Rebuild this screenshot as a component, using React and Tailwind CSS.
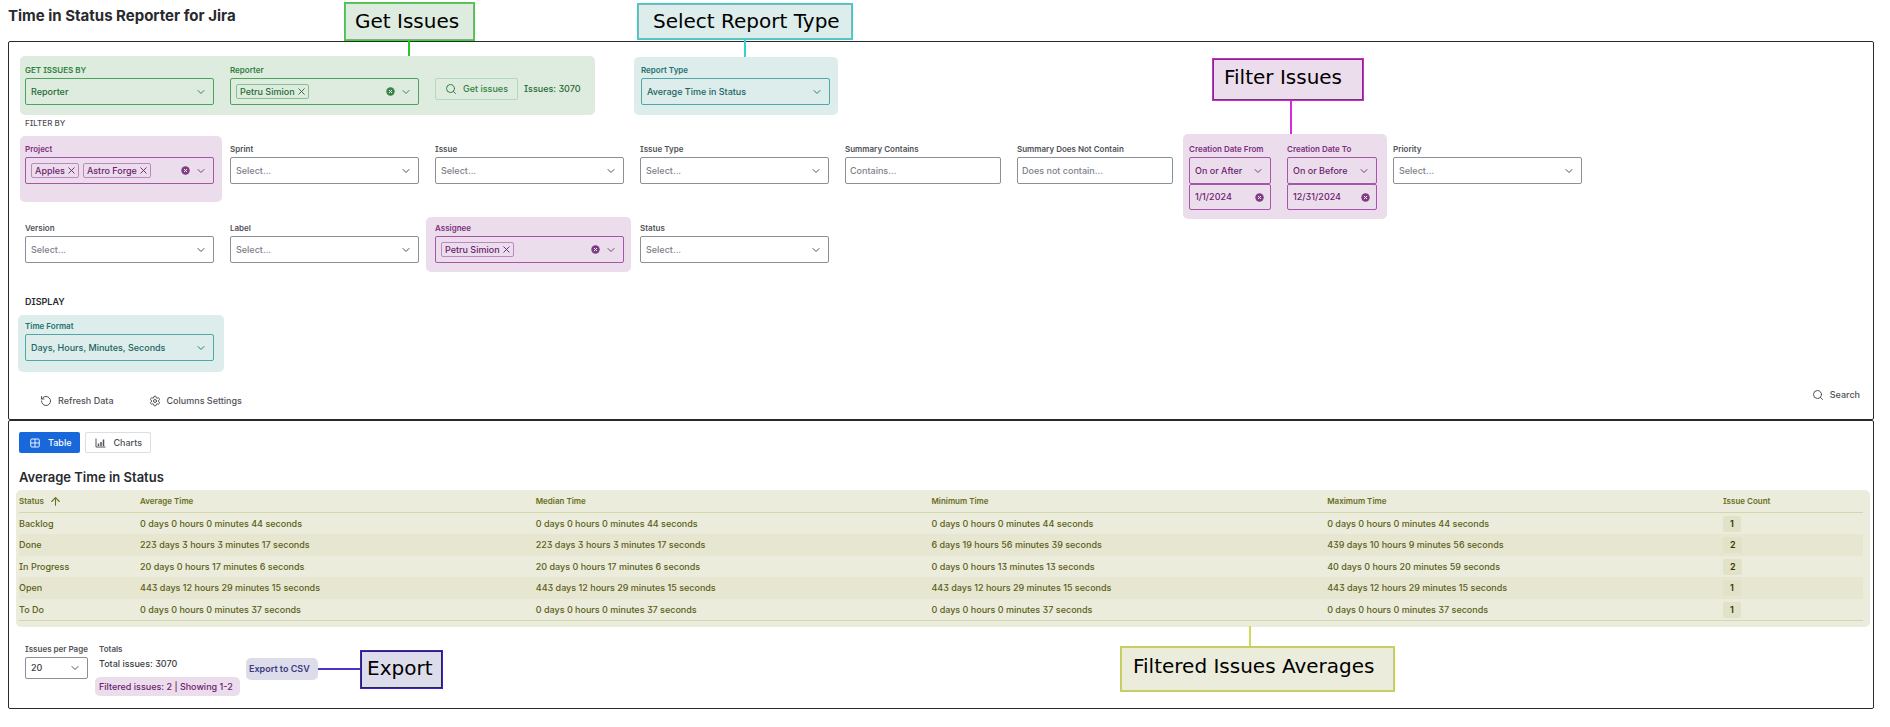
import React from "react";
import { ArrowUp, ChevronDown, RotateCcw, Search, Settings, X } from "lucide-react";

const tones = {
  plain: {
    label: "text-[#505258]",
    box: "border-[#8c8f97] bg-white",
    text: "text-[#7d818a]",
    icon: "text-[#505258]",
    tag: "",
  },
  green: {
    label: "text-[#2f8140]",
    box: "border-[#4ea35c]",
    text: "text-[#256b35]",
    icon: "text-[#3a8449]",
    tag: "border-[#86c190] text-[#256b35]",
  },
  teal: {
    label: "text-[#26716f]",
    box: "border-[#4fa8a5]",
    text: "text-[#1d6462]",
    icon: "text-[#2b7b79]",
    tag: "",
  },
  purple: {
    label: "text-[#7c2f80]",
    box: "border-[#a655a8]",
    text: "text-[#6b2270]",
    icon: "text-[#7f3b84]",
    tag: "border-[#bf87c2] text-[#6b2270]",
  },
};

const labelClass = "block h-[10px] whitespace-nowrap text-[8px] leading-[10px] font-semibold";

function ClearIcon() {
  return (
    <svg viewBox="0 0 16 16" className="size-[9px]" aria-hidden="true">
      <circle cx="8" cy="8" r="7.5" fill="currentColor" />
      <path d="M5.3 5.3l5.4 5.4M10.7 5.3l-5.4 5.4" stroke="white" strokeWidth="1.7" />
    </svg>
  );
}

function ChartIcon() {
  return (
    <svg viewBox="0 0 22 20" className="h-[10px] w-[11px]" fill="none" stroke="currentColor" strokeWidth="2" aria-hidden="true">
      <path d="M2 1v17h19" />
      <path d="M7 11v5M12 8v8M17 3v13" strokeWidth="3" />
    </svg>
  );
}

function TableIcon() {
  return (
    <svg viewBox="0 0 20 20" className="size-[10px]" fill="none" stroke="currentColor" strokeWidth="1.8" aria-hidden="true">
      <rect x="1.5" y="2" width="17" height="16" rx="2" />
      <path d="M10 2v16M1.5 10h17" />
    </svg>
  );
}

function SelectBox({ id, value, tone = "plain", dark = false, height = "h-[27px]" }) {
  const t = tones[tone];
  return (
    <div className={`relative ${height}`}>
      <select
        id={id}
        defaultValue={value}
        className={`block size-full appearance-none rounded-[2px] border pr-5 pl-[5px] text-[9px] font-medium outline-none ${t.box} ${dark ? "text-[#3b3d42]" : t.text}`}
      >
        <option>{value}</option>
      </select>
      <ChevronDown className={`pointer-events-none absolute inset-y-0 right-[7px] my-auto size-3 ${t.icon}`} />
    </div>
  );
}

function SelectField({ id, label, value = "Select...", tone = "plain", width = "w-[189px]" }) {
  return (
    <div className={`shrink-0 ${width}`}>
      <label htmlFor={id} className={`mb-[3px] ${labelClass} ${tones[tone].label}`}>{label}</label>
      <SelectBox id={id} value={value} tone={tone} />
    </div>
  );
}

function MultiField({ id, label, values, tone }) {
  const t = tones[tone];
  return (
    <div className="w-[189px] shrink-0">
      <label htmlFor={id} className={`mb-[3px] ${labelClass} ${t.label}`}>{label}</label>
      <div className={`flex h-[27px] items-center gap-1 rounded-[2px] border pr-[6px] pl-[5px] ${t.box}`}>
        {values.map((v) => (
          <span key={v} className={`flex h-[15px] shrink-0 items-center gap-px rounded-[2px] border pr-px pl-[3px] text-[9px] font-medium whitespace-nowrap ${t.tag}`}>
            {v}
            <button type="button" aria-label={`Remove ${v}`}><X className="size-[11px]" /></button>
          </span>
        ))}
        <input id={id} className="w-0 min-w-0 flex-1 bg-transparent text-[9px] outline-none" />
        <button type="button" aria-label={`Clear ${label}`} className={`mr-px ${t.icon}`}><ClearIcon /></button>
        <button type="button" aria-label={`Open ${label}`} className={t.icon}><ChevronDown className="size-3" /></button>
      </div>
    </div>
  );
}

function TextField({ id, label, placeholder }) {
  return (
    <div className="w-[156px] shrink-0">
      <label htmlFor={id} className={`mb-[3px] ${labelClass} text-[#505258]`}>{label}</label>
      <input
        id={id}
        placeholder={placeholder}
        className="block h-[27px] w-full rounded-[2px] border border-[#8c8f97] px-1 text-[9px] font-medium outline-none placeholder:text-[#7d818a]"
      />
    </div>
  );
}

function DateField({ id, label, mode, date, width }) {
  return (
    <div className={`shrink-0 ${width}`}>
      <SelectField id={id} label={label} value={mode} tone="purple" width="w-full" />
      <div className="flex h-[26px] items-center rounded-[2px] border border-[#a655a8] pr-[6px] pl-[5px] text-[#7f3b84]">
        <input aria-label={`${label} value`} defaultValue={date} className="w-0 min-w-0 flex-1 bg-transparent pb-px text-[9px] font-medium text-[#6b2270] outline-none" />
        <button type="button" aria-label={`Clear ${label}`}><ClearIcon /></button>
      </div>
    </div>
  );
}

function Callout({ children, place, box, line }) {
  return (
    <div className={`pointer-events-none absolute z-10 ${place}`}>
      <div className={`border font-['DejaVu_Sans',sans-serif] text-[20px] leading-6 whitespace-nowrap text-black ring-1 ring-inset [font-feature-settings:normal] ${box}`}>{children}</div>
      <div className={`absolute ${line}`} />
    </div>
  );
}

const columns = ["Average Time", "Median Time", "Minimum Time", "Maximum Time"];

const rows = [
  ["Backlog", "0 days 0 hours 0 minutes 44 seconds", "0 days 0 hours 0 minutes 44 seconds", "0 days 0 hours 0 minutes 44 seconds", "0 days 0 hours 0 minutes 44 seconds", 1],
  ["Done", "223 days 3 hours 3 minutes 17 seconds", "223 days 3 hours 3 minutes 17 seconds", "6 days 19 hours 56 minutes 39 seconds", "439 days 10 hours 9 minutes 56 seconds", 2],
  ["In Progress", "20 days 0 hours 17 minutes 6 seconds", "20 days 0 hours 17 minutes 6 seconds", "0 days 0 hours 13 minutes 13 seconds", "40 days 0 hours 20 minutes 59 seconds", 2],
  ["Open", "443 days 12 hours 29 minutes 15 seconds", "443 days 12 hours 29 minutes 15 seconds", "443 days 12 hours 29 minutes 15 seconds", "443 days 12 hours 29 minutes 15 seconds", 1],
  ["To Do", "0 days 0 hours 0 minutes 37 seconds", "0 days 0 hours 0 minutes 37 seconds", "0 days 0 hours 0 minutes 37 seconds", "0 days 0 hours 0 minutes 37 seconds", 1],
];

function FilterPanel() {
  return (
    <section className="rounded-[2px] border border-[#292a2e] pt-[14px] pr-3 pb-[7px] pl-4">
      <div className="flex items-start">
        <div className="relative -ml-[5px] flex h-[59px] w-[575px] shrink-0 items-start gap-4 rounded-[5px] bg-[#deecdf] pt-[9px] pl-[5px]">
          <SelectField id="get-by" label="GET ISSUES BY" value="Reporter" tone="green" />
          <MultiField id="reporter" label="Reporter" values={["Petru Simion"]} tone="green" />
          <div className="mt-[13px] flex items-center gap-[6px] text-[9px] font-medium whitespace-nowrap text-[#256b35]">
            <button type="button" className="flex h-[22px] w-[83px] items-center gap-[6px] rounded-[2px] border border-[#b5d8ba] pl-[9px] text-[#2f8140]">
              <Search className="size-3" />
              Get issues
            </button>
            <span>Issues: 3070</span>
          </div>
          <Callout
            place="-top-[54px] left-[324px]"
            box="h-[39px] w-[131px] border-[#35d435] bg-[#deecdf] pt-[6px] pl-[10px] ring-[#7fae85]"
            line="top-full left-[64px] h-[15px] w-[2px] bg-[#2fc02f]"
          >
            Get Issues
          </Callout>
        </div>
        <div className="relative mt-px ml-[39px] h-[58px] w-[204px] shrink-0 rounded-[5px] bg-[#dcedec] pt-2 pl-[7px]">
          <SelectField id="report-type" label="Report Type" value="Average Time in Status" tone="teal" />
          <Callout
            place="-top-[54px] left-[3px]"
            box="h-[37px] w-[216px] border-[#2fd3d6] bg-[#dcedec] pt-[5px] pl-[15px] ring-[#7fb5b3]"
            line="top-full left-[107px] h-[17px] w-[2px] bg-[#2fd3d6]"
          >
            Select Report Type
          </Callout>
        </div>
      </div>

      <h2 className="mt-[3px] text-[8px] leading-[10px] font-medium text-[#505258]">FILTER BY</h2>

      <div className="mt-4 flex items-start gap-4">
        <div className="-mt-2 -mr-2 -mb-[18px] -ml-[5px] rounded-[5px] bg-[#ecddec] pt-2 pr-2 pb-[18px] pl-[5px]">
          <MultiField id="project" label="Project" values={["Apples", "Astro Forge"]} tone="purple" />
        </div>
        <SelectField id="sprint" label="Sprint" />
        <SelectField id="issue" label="Issue" />
        <SelectField id="issue-type" label="Issue Type" />
        <TextField id="summary-has" label="Summary Contains" placeholder="Contains..." />
        <TextField id="summary-not" label="Summary Does Not Contain" placeholder="Does not contain..." />
        <div className="relative -mt-[10px] -mr-[10px] -mb-[9px] -ml-[6px] flex gap-4 rounded-[5px] bg-[#ecddec] pt-[10px] pr-[10px] pb-[9px] pl-[6px]">
          <DateField id="date-from" label="Creation Date From" mode="On or After" date="1/1/2024" width="w-[82px]" />
          <DateField id="date-to" label="Creation Date To" mode="On or Before" date="12/31/2024" width="w-[90px]" />
          <Callout
            place="-top-[76px] left-[29px]"
            box="h-[43px] w-[152px] border-[#dc1fdc] bg-[#ecddec] pt-[6px] pl-[11px] ring-[#6f3a72]"
            line="top-full left-[78px] h-[33px] w-[2px] bg-[#d42bd4]"
          >
            Filter Issues
          </Callout>
        </div>
        <SelectField id="priority" label="Priority" />
      </div>

      <div className="mt-[13px] flex items-start gap-4">
        <SelectField id="version" label="Version" />
        <SelectField id="label" label="Label" />
        <div className="-mt-[6px] -mr-[7px] -mb-[9px] -ml-[9px] rounded-[5px] bg-[#ecddec] pt-[6px] pr-[7px] pb-[9px] pl-[9px]">
          <MultiField id="assignee" label="Assignee" values={["Petru Simion"]} tone="purple" />
        </div>
        <SelectField id="status" label="Status" />
      </div>

      <h2 className="mt-[33px] text-[9px] leading-3 font-semibold text-[#292a2e]">DISPLAY</h2>
      <div className="mt-[7px] -ml-[7px] h-[57px] w-[206px] rounded-[5px] bg-[#dcedec] pt-[6px] pl-[7px]">
        <SelectField id="time-format" label="Time Format" value="Days, Hours, Minutes, Seconds" tone="teal" />
      </div>

      <div className="mt-3 flex h-7 items-start justify-between text-[9px] font-medium text-[#505258]">
        <div className="flex gap-[35px] self-end pl-[15px]">
          <button type="button" className="flex h-[22px] items-center gap-[6px]">
            <RotateCcw className="size-3" />
            Refresh Data
          </button>
          <button type="button" className="flex h-[22px] items-center gap-[6px]">
            <Settings className="size-3" />
            Columns Settings
          </button>
        </div>
        <button type="button" className="flex h-[22px] items-center gap-[6px] pr-px">
          <Search className="size-3" />
          Search
        </button>
      </div>
    </section>
  );
}

function ResultsPanel() {
  return (
    <section className="rounded-[2px] border border-[#292a2e] pt-[11px] pb-3">
      <div className="flex gap-[5px] pl-[10px] text-[9px] font-medium">
        <button type="button" className="flex h-[21px] items-center gap-2 rounded-[2px] bg-[#1868db] pr-[9px] pl-[11px] text-white">
          <TableIcon />
          Table
        </button>
        <button type="button" className="flex h-[21px] items-center gap-[7px] rounded-[2px] border border-[#dddee1] pr-2 pl-[9px] text-[#505258]">
          <ChartIcon />
          Charts
        </button>
      </div>

      <h2 className="mt-4 pl-[10px] text-[13px] leading-4 font-semibold text-[#292a2e]">Average Time in Status</h2>

      <div className="relative mt-[5px] mr-[3px] ml-[7px] rounded-[5px] bg-[#ebecdb] pr-[7px] pb-[6px] pl-[3px]">
        <table className="w-full table-fixed border-separate border-spacing-0 border-b border-[#d3d7ae] text-left text-[9px] font-medium text-[#5c6018]">
          <thead>
            <tr className="h-[23px] text-[8px] text-[#6a6e22]">
              <th className="w-[121px] border-b border-[#d3d7ae] p-0 font-semibold">
                <span className="flex items-center gap-[5px]">
                  Status
                  <ArrowUp className="size-[13px]" />
                </span>
              </th>
              {columns.map((c) => (
                <th key={c} className="w-[21.46%] border-b border-[#d3d7ae] p-0 font-semibold">{c}</th>
              ))}
              <th className="border-b border-[#d3d7ae] p-0 font-semibold">Issue Count</th>
            </tr>
          </thead>
          <tbody>
            {rows.map(([status, avg, median, min, max, count]) => (
              <tr key={status} className="odd:h-[21px] even:h-[22px] even:bg-[#e7e7d1]">
                <td className="p-0">{status}</td>
                <td className="p-0">{avg}</td>
                <td className="p-0">{median}</td>
                <td className="p-0">{min}</td>
                <td className="p-0">{max}</td>
                <td className="p-0">
                  <span className="flex h-4 w-fit items-center rounded-[2px] bg-[#e1e2c8] px-[7px] font-semibold text-[#33360a]">{count}</span>
                </td>
              </tr>
            ))}
          </tbody>
        </table>
        <Callout
          place="top-[156px] left-[1104px]"
          box="h-[46px] w-[275px] border-[#cbd52f] bg-[#ebecdb] pt-[7px] pl-3 ring-[#c3c795]"
          line="bottom-full left-[129px] h-5 w-[2px] bg-[#d2da5a]"
        >
          Filtered Issues Averages
        </Callout>
      </div>

      <div className="mt-[17px] flex items-start pl-4 text-[9px] leading-3 font-medium text-[#3b3d42]">
        <div className="w-[63px]">
          <label htmlFor="per-page" className={`mb-[3px] ${labelClass} text-[#505258]`}>Issues per Page</label>
          <SelectBox id="per-page" value="20" dark height="h-[22px]" />
        </div>
        <div className="ml-[7px]">
          <h3 className={`pl-1 ${labelClass} text-[#505258]`}>Totals</h3>
          <p className="mt-1 pl-1">Total issues: 3070</p>
          <p className="mt-[7px] flex h-[19px] w-[145px] items-center rounded-[5px] bg-[#ecddec] px-1 text-[#6b2270]">Filtered issues: 2 | Showing 1-2</p>
        </div>
        <div className="relative mt-[14px] ml-[6px]">
          <button type="button" className="flex h-[22px] w-[72px] items-center rounded-[5px] bg-[#dddceb] pl-[3px] font-semibold text-[#3b3a80]">Export to CSV</button>
          <Callout
            place="-top-2 left-[114px]"
            box="h-[39px] w-[83px] border-[#3f20d8] bg-[#dddceb] pt-[5px] pl-[6px] ring-[#26264f]"
            line="top-[18px] right-full h-[2px] w-[42px] bg-[#4a35c8]"
          >
            Export
          </Callout>
        </div>
      </div>
    </section>
  );
}

export default function App() {
  return (
    <main className="bg-white pr-4 pb-[18px] pl-2 font-['Inter',sans-serif] [font-feature-settings:'cv08','cv09']">
      <h1 className="flex h-[41px] items-start pt-[5px] text-[15px] leading-[22px] font-bold text-[#292a2e]">Time in Status Reporter for Jira</h1>
      <FilterPanel />
      <ResultsPanel />
    </main>
  );
}
